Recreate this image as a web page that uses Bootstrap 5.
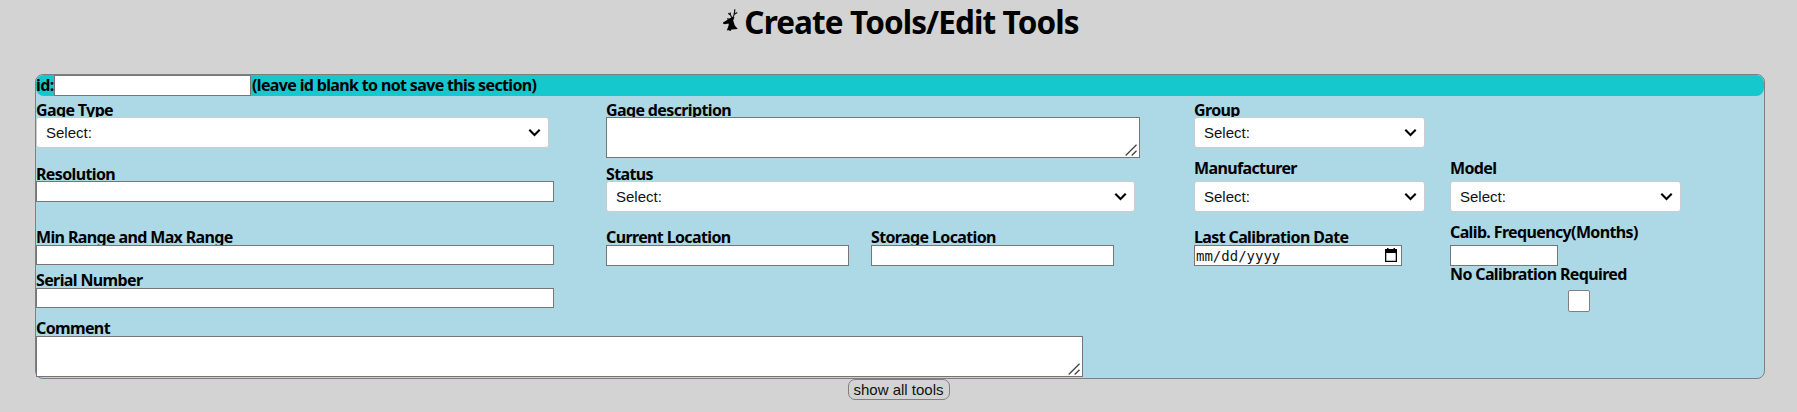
<!DOCTYPE html>
<html lang="en">
<head>
<meta charset="utf-8">
<title>Create Tools/Edit Tools</title>
<link rel="stylesheet" href="https://cdn.jsdelivr.net/npm/bootstrap@5.3.0/dist/css/bootstrap.min.css">
<style>
body{background:#d3d3d3;color:#000;font-family:"Noto Sans","Open Sans",sans-serif;font-size:16px;line-height:20px;overflow:hidden}
.page-title{height:74px;padding:0 0 0 4px;font-size:31.5px;line-height:44px;font-weight:700;letter-spacing:-.9px;white-space:nowrap}
.deer{width:17px;height:24px;margin:8px 5px 0 0;flex:none}
.tool-card{width:1730px;height:305px;margin-left:35px;border:1px solid #808080;border-radius:8px;background:#add8e6}
.tool-head{height:21px;background:#15c8cd;border-radius:8px;font-weight:700;letter-spacing:-.55px;white-space:nowrap}
.tool-head .idlbl{width:18px}
.tool-head .hint{margin-left:1px;letter-spacing:-.65px}
.tool-body{height:282px}
.c1{width:570px}.c2{width:588px}.c3{width:256px}.c4{width:231px}
.lbl{display:block;height:18px;font-weight:700;letter-spacing:-.63px;white-space:nowrap}
.lbl.cut{height:17px}.lbl.tall{height:23px}
.box,.area,.pick{position:relative}
.box,.area{display:block;border:1px solid #767676;border-radius:0;background-color:#fff;padding:0 2px;margin:0;height:21px}
.box.low{height:20px}
.area{height:41px;resize:none;background-repeat:no-repeat;background-position:right 2px bottom 1px;background-image:url("data:image/svg+xml,%3Csvg xmlns='http://www.w3.org/2000/svg' width='12' height='12'%3E%3Cpath d='M.7 11.5 11.5.7M6.7 11.5 11.5 6.7' fill='none' stroke='%23444' stroke-width='1.3'/%3E%3C/svg%3E")}
.pick.form-select{height:31px;padding:0 30px 0 9px;border:1px solid #ccc;border-radius:3px;color:#111;font:15px/28px "Liberation Sans",Arial,sans-serif;background-size:13px 9px;background-position:right 7px center;background-image:url("data:image/svg+xml,%3Csvg xmlns='http://www.w3.org/2000/svg' viewBox='0 0 13 9'%3E%3Cpath d='M1.3 1.7 6.5 6.9 11.7 1.7' fill='none' stroke='%23000' stroke-width='2.1'/%3E%3C/svg%3E")}
.date-box{width:208px;padding:0 2px 0 1px;font:14px/21px "DejaVu Sans Mono",monospace;color:#111}
.check{width:22px;height:22px;border:1px solid #808080;border-radius:2px;background:#fff;appearance:none;display:block}
.show-all{height:21px;width:102px;padding:0;border:1px solid #808080;border-radius:7px;background:#d3d3d3;color:#111;font:15px/18px "Liberation Sans",Arial,sans-serif}
</style>
</head>
<body>
<h1 class="page-title d-flex justify-content-center align-items-start m-0">
<svg class="deer" viewBox="0 0 17 24"><path d="M10 10.2C8.8 8 8 6.6 8.2 4.5M10.2 10C12 8.6 12.6 6 12.8 1.2M12.3 6.2 15.3 4.4M8.5 7 6.2 5.2" fill="none" stroke="#111" stroke-width="1.2"/><path d="M12.5 9.3 10.5 9.2 7 10.6 4.8 10.2 5.6 11.8 1 14.5 1.2 15.8 3 16.2 6.4 15.6 6.8 17 4.7 22.8 6 22.1 8.4 23 9.6 21.5 15.8 20.9 12.8 17.4 11.2 12.5Z"/></svg>
<span>Create Tools/Edit Tools</span></h1>
<main class="tool-card">
<div class="tool-head d-flex"><span class="idlbl">id:</span><input class="box me-0" style="width:197px" aria-label="id"><span class="hint">(leave id blank to not save this section)</span></div>
<div class="tool-body d-flex">
<div class="c1">
<label class="lbl cut" style="margin-top:4px">Gage Type</label><select class="form-select pick" style="width:513px"><option>Select:</option></select>
<label class="lbl cut" style="margin-top:16px">Resolution</label><input class="box" style="width:518px">
<label class="lbl" style="margin-top:25px">Min Range and Max Range</label><input class="box low" style="width:518px">
<label class="lbl" style="margin-top:5px">Serial Number</label><input class="box low" style="width:518px">
<label class="lbl" style="margin-top:10px">Comment</label><textarea class="area" style="width:1047px"></textarea>
</div>
<div class="c2">
<label class="lbl cut" style="margin-top:4px">Gage description</label><textarea class="area" style="width:534px"></textarea>
<label class="lbl cut" style="margin-top:6px">Status</label><select class="form-select pick" style="width:529px"><option>Select:</option></select>
<div class="d-flex" style="margin-top:15px"><div style="width:265px"><label class="lbl">Current Location</label><input class="box" style="width:243px"></div><div><label class="lbl">Storage Location</label><input class="box" style="width:243px"></div></div>
</div>
<div class="c3">
<label class="lbl cut" style="margin-top:4px">Group</label><select class="form-select pick" style="width:231px"><option>Select:</option></select>
<label class="lbl tall" style="margin-top:10px">Manufacturer</label><select class="form-select pick" style="width:231px"><option>Select:</option></select>
<label class="lbl" style="margin-top:15px">Last Calibration Date</label>
<div class="box date-box d-flex justify-content-between"><span>mm/dd/yyyy</span><svg width="12" height="14" viewBox="0 0 12 14" style="margin:2px 2px 0 0"><path d="M2 0h1.5v1h5V0H10v1h2v13H0V1h2zM1.3 5v7.7h9.4V5z" fill-rule="evenodd"/></svg></div>
</div>
<div class="c4">
<label class="lbl tall" style="margin-top:62px">Model</label><select class="form-select pick"><option>Select:</option></select>
<label class="lbl tall" style="margin-top:10px">Calib. Frequency(Months)</label><input class="box" style="width:108px">
<label class="lbl tall" style="margin-top:-2px">No Calibration Required</label><input type="checkbox" class="check" style="margin:3px 0 0 118px">
</div>
</div>
</main>
<div class="d-flex justify-content-center"><button class="show-all">show all tools</button></div>
<script src="https://cdn.jsdelivr.net/npm/bootstrap@5.3.0/dist/js/bootstrap.bundle.min.js"></script>
</body>
</html>
